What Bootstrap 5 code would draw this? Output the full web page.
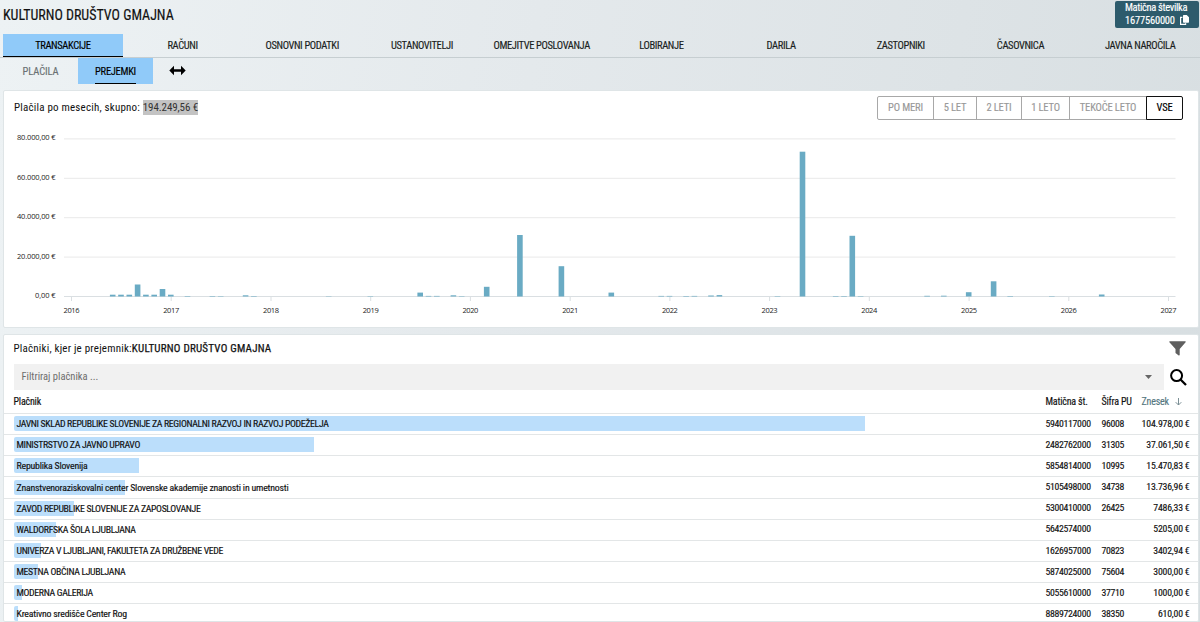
<!DOCTYPE html>
<html lang="sl">
<head>
<meta charset="utf-8">
<meta name="viewport" content="width=device-width, initial-scale=1">
<title>KULTURNO DRUŠTVO GMAJNA</title>
<link rel="stylesheet" href="https://cdn.jsdelivr.net/npm/bootstrap@5.3.0/dist/css/bootstrap.min.css">
<style>
body{height:622px;font-family:"Roboto Condensed",Roboto,sans-serif;font-stretch:75%;font-size:11px;line-height:14px;color:#111;-webkit-text-stroke:.15px;background:linear-gradient(98deg,#edf2f4 0%,#e4e9ec 42%,#dde3e6 75%,#d7dee1 100%)}
.top-bar{height:34px;padding-left:3px}
.org-name{font-size:14px;line-height:18px;padding-top:6px;font-weight:400;letter-spacing:-.02px}
.id-badge{width:84px;height:27px;margin:1px 1px 0 0;padding:0 0 0 10px;background:#2d5b6c;color:#fff;border-radius:2px;line-height:13px;font-size:10.5px;letter-spacing:-.2px;white-space:nowrap}
.id-badge svg{vertical-align:-1px;margin-left:3px}
.main-tabs{height:24px;padding-left:3px;border-bottom:1px solid #c6ced1}
.main-tabs .nav-link{flex:1 1 0;padding:0;height:23px;line-height:23px;color:#1b1f22;text-align:center;border-radius:0;font-size:10.5px;letter-spacing:-.38px}
.main-tabs .nav-link.active{background:#90caf9;border-bottom:1px solid #000;color:#000}
.sub-tabs{height:32px;padding-left:3px}
.sub-tabs .nav-link{width:75px;height:26px;line-height:27px;padding:0;text-align:center;color:#6b7174;font-size:10.5px;letter-spacing:-.3px}
.sub-tabs .nav-link:first-child{letter-spacing:-.1px}
.sub-tabs .nav-link.active{background:#90caf9;color:#000}
.sub-tabs .active span{display:inline-block;height:26px;border-bottom:1px solid #000}
.panel{background:#fff;border:1px solid #dfe5e7;border-radius:2px}
.chart-panel{height:238px;margin:0 1px 0 3px}
.list-panel{height:288px;margin:6px 1px 0 3px;overflow:hidden}
.sum-text{font-size:11px;margin-left:10px;letter-spacing:.2px;-webkit-text-stroke:0}
.sum-text mark{background:#c3c3c3;padding:1px 0;color:#333;letter-spacing:-.1px}
.payee{letter-spacing:.22px;-webkit-text-stroke:.25px}
.range-group{margin:5px 15px 0 0;height:25px}
.range-group .btn{border:1px solid #a8a8a8;color:#999;background:#fff;font-size:10.5px;line-height:22px;padding:0;height:24px;border-radius:2px;letter-spacing:-.15px}
.range-group .btn.active{border-color:#111;color:#000;background:#fff}
.chart-svg text{font-family:"Open Sans","Noto Sans",sans-serif;font-stretch:100%;font-size:7.5px;fill:#222;stroke:none}
.filter-box{width:1150px;height:26px;background:#f1f1f1;padding:0 12px 0 8px;color:#6d6d6d;font-size:10.5px;-webkit-text-stroke:0}
.row-line{display:grid;grid-template-columns:1032px 56px 40px 48px;border-bottom:1px solid #e3e6e7;padding-left:9.5px;height:21.17px;align-items:center;font-size:9.8px;line-height:14px;letter-spacing:-.2px}
.row-line>div{margin-top:-1px}
.row-line .num{letter-spacing:-.32px}
.row-head{height:22px;margin-top:2px;font-size:10px}
.payer{position:relative;height:15px;line-height:15px;padding-left:3px}
.caps{letter-spacing:-.35px}
.payer .fill{position:absolute;left:0;top:0;height:15px;background:#bbdefb;border-radius:2px 0 0 2px}
.payer span{position:relative}
</style>
</head>
<body class="overflow-hidden">
<header class="top-bar d-flex justify-content-between align-items-start">
  <h1 class="org-name m-0">KULTURNO DRUŠTVO GMAJNA</h1>
  <div class="id-badge"><span style="letter-spacing:-.35px">Matična številka</span><br>1677560000
    <svg width="9" height="10" viewBox="0 0 9 10"><path d="M3.700 0h3L9 2.300V7a.7.7 0 0 1-.7.7H3.700A.7.7 0 0 1 3 7V.7a.7.7 0 0 1 .7-.7z" fill="#fff"/><path d="M2.400 2.400H.6v7h5V8.300" fill="none" stroke="#fff" stroke-width="1.200"/></svg>
  </div>
</header>
<nav class="nav main-tabs flex-nowrap">
  <a class="nav-link active">TRANSAKCIJE</a><a class="nav-link">RAČUNI</a><a class="nav-link">OSNOVNI PODATKI</a><a class="nav-link">USTANOVITELJI</a><a class="nav-link">OMEJITVE POSLOVANJA</a><a class="nav-link">LOBIRANJE</a><a class="nav-link">DARILA</a><a class="nav-link">ZASTOPNIKI</a><a class="nav-link">ČASOVNICA</a><a class="nav-link">JAVNA NAROČILA</a>
</nav>
<nav class="nav sub-tabs">
  <a class="nav-link">PLAČILA</a><a class="nav-link active"><span>PREJEMKI</span></a>
  <svg style="margin:7px 0 0 16px" width="17" height="11" viewBox="0 0 17 11"><path d="M.3 5.500 5 .8v3.400h7V.8l4.700 4.700L12 10.200V6.800H5v3.400z" fill="#000"/></svg>
</nav>
<section class="panel chart-panel">
  <div class="d-flex justify-content-between align-items-start">
    <div class="sum-text" style="padding-top:10px">Plačila po mesecih, skupno: <mark>194.249,56 €</mark></div>
    <div class="btn-group range-group">
      <button class="btn" style="width:57px">PO MERI</button><button class="btn" style="width:44px">5 LET</button><button class="btn" style="width:46px">2 LETI</button><button class="btn" style="width:49px">1 LETO</button><button class="btn" style="width:78px">TEKOČE LETO</button><button class="btn active" style="width:37px">VSE</button>
    </div>
  </div>
  <svg class="chart-svg d-block" id="chart" width="1190" height="200" viewBox="4 121 1190 200"></svg>
</section>
<section class="panel list-panel">
  <div class="d-flex justify-content-between" style="padding:6px 12px 0 9.5px;height:29px">
    <div class="sum-text ms-0" style="line-height:16px">Plačniki, kjer je prejemnik:<span class="payee">KULTURNO DRUŠTVO GMAJNA</span></div>
    <svg width="17" height="15" viewBox="0 0 17 15"><path d="M.6.3h15.800q.6.4.2 1L10.700 8v6q-.3.7-1 .4L6.500 12V8L.4 1.300q-.3-.7.2-1z" fill="#5f5f5f"/></svg>
  </div>
  <div class="d-flex align-items-center" style="padding-left:9.5px;height:26px">
    <div class="filter-box d-flex align-items-center justify-content-between"><span>Filtriraj plačnika ...</span><svg width="7" height="4" viewBox="0 0 7 4"><path d="M0 0h7L3.500 4z" fill="#666"/></svg></div>
    <svg style="margin-left:6px" width="17" height="17" viewBox="0 0 17 17"><circle cx="6.600" cy="6.600" r="5.500" fill="none" stroke="#000" stroke-width="2"/><path d="m10.500 10.500 5.500 5.500" stroke="#000" stroke-width="2.300"/></svg>
  </div>
  <div class="row-line row-head"><div>Plačnik</div><div>Matična št.</div><div>Šifra PU</div><div style="color:#56777f" class="text-nowrap">Znesek <svg class="ms-1" width="7" height="8" viewBox="0 0 7 8"><path d="M3.500 0v7M.7 4.200l2.800 2.800 2.800-2.800" fill="none" stroke="#7b8f95"/></svg></div></div>
  <div id="rows"></div>
</section>
<script src="https://cdn.jsdelivr.net/npm/bootstrap@5.3.0/dist/js/bootstrap.bundle.min.js"></script>
<script>
const payers = [
  ["JAVNI SKLAD REPUBLIKE SLOVENIJE ZA REGIONALNI RAZVOJ IN RAZVOJ PODEŽELJA","5940117000","96008","104.978,00 €",104978],
  ["MINISTRSTVO ZA JAVNO UPRAVO","2482762000","31305","37.061,50 €",37061],
  ["Republika Slovenija","5854814000","10995","15.470,83 €",15471],
  ["Znanstvenoraziskovalni center Slovenske akademije znanosti in umetnosti","5105498000","34738","13.736,96 €",13737],
  ["ZAVOD REPUBLIKE SLOVENIJE ZA ZAPOSLOVANJE","5300410000","26425","7486,33 €",7486],
  ["WALDORFSKA ŠOLA LJUBLJANA","5642574000","","5205,00 €",5205],
  ["UNIVERZA V LJUBLJANI, FAKULTETA ZA DRUŽBENE VEDE","1626957000","70823","3402,94 €",3403],
  ["MESTNA OBČINA LJUBLJANA","5874025000","75604","3000,00 €",3000],
  ["MODERNA GALERIJA","5055610000","37710","1000,00 €",1000],
  ["Kreativno središče Center Rog","8889724000","38350","610,00 €",610]
];
document.getElementById("rows").innerHTML = payers.map(([n,m,s,z,v]) =>
  `<div class="row-line"><div class="payer${n === n.toUpperCase() ? " caps" : ""}"><div class="fill" style="width:${(v/104978*851).toFixed(1)}px"></div><span>${n}</span></div><div class="num">${m}</div><div class="num">${s}</div><div class="d-flex justify-content-end text-nowrap">${z}</div></div>`).join("");

// Monthly totals: [months since January 2016, amount in EUR]
const months = [[5,900],[6,900],[7,900],[8,6100],[9,900],[10,900],[11,3800],[12,900],[14,250],[17,250],[18,200],[21,600],[22,250],[31,150],[36,200],[42,2000],[43,300],[44,300],[46,600],[47,200],[50,4900],[54,31200],[59,15400],[65,2000],[71,300],[72,300],[74,250],[75,300],[77,500],[78,700],[85,200],[88,73500],[92,250],[93,250],[94,30800],[95,200],[103,350],[105,400],[108,2200],[111,7700],[113,250],[118,200],[124,1000]];
let g = "";
for (let i = 0; i < 5; i++) {
  const y = 296.5 - i * 39.4;
  g += `<path d="M64 ${y.toFixed(1)}H1175.500" stroke="${i ? "#e9e9e9" : "#dadfe2"}"/><text x="55.500" y="${(y+1.500).toFixed(1)}" text-anchor="end" textLength="${i ? 38.5 : 20.5}">${i ? i*20 + ".000,00 €" : "0,00 €"}</text>`;
}
for (let i = 0; i < 12; i++) {
  const x = 71.5 + i * 99.73;
  g += `<path d="M${x.toFixed(1)} 297v4" stroke="#dadfe2"/><text x="${x.toFixed(1)}" y="313" text-anchor="middle" textLength="16">${2016+i}</text>`;
}
for (const [m,v] of months) {
  const h = v * 157.6 / 80000;
  g += `<rect x="${(68.300 + m*8.311).toFixed(1)}" y="${(296.5-h).toFixed(1)}" width="5.600" height="${h.toFixed(1)}" fill="#6aabc4"/>`;
}
document.getElementById("chart").innerHTML = g;
</script>
</body>
</html>
